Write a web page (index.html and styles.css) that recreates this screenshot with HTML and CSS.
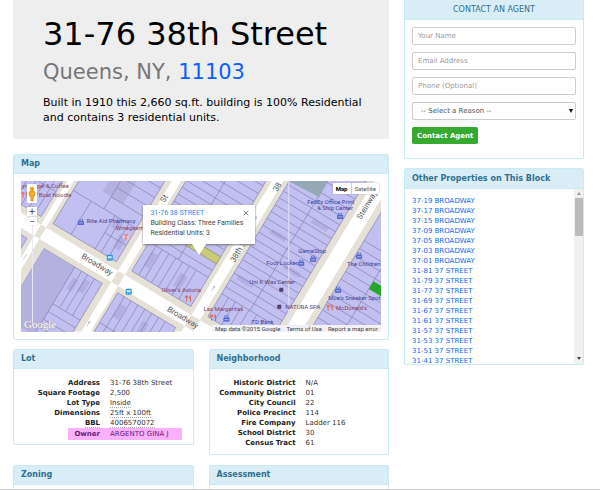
FILE: index.html
```html
<!DOCTYPE html>
<html lang="en">
<head>
<meta charset="utf-8">
<title>31-76 38th Street</title>
<link rel="stylesheet" href="styles.css">
</head>
<body>
<div class="page">
  <main class="main">
    <header class="hero">
      <h1>31-76 38th Street</h1>
      <p class="city">Queens, NY, <a href="#">11103</a></p>
      <p class="summary">Built in 1910 this 2,660 sq.ft. building is 100% Residential and contains 3 residential units.</p>
    </header>

    <section class="panel">
      <h2>Map</h2>
      <div class="map-body">
        <div class="map">
          <svg class="map-art" viewBox="20 181 361 151" aria-label="Street map">
            <defs>
              <g id="shop"><path d="M-3-1H3V3H-3ZM-2-1V-3H2V-1" fill="#5067c9"/><path d="M-1-1V-2H1V-1M-2 1H2" stroke="#d6d8fa" stroke-width=".7" fill="none"/></g>
              <g id="food" fill="none" stroke="#dd6954" stroke-width=".9"><path d="M-2-3V3M-3-3V-1H-1V-3M2 3V-3Q0-2 1 0H2"/></g>
              <g id="bus"><rect x="-3" y="-3" width="6" height="6" rx="1" fill="#2495e4"/><path d="M-2-1.500H2V.5H-2Z" fill="#d4edff"/><path d="M-1.500 2H-.7M.7 2H1.500" stroke="#fff" stroke-width=".8"/></g>
            </defs>
            <path class="walk" d="M20 181H381V332H20Z"/>
            <g transform="translate(116 275) rotate(31)">
              <path class="road" d="M-140-4H300V9H-140ZM-91-200V200H-85V-200ZM-1-250V150H7V-250ZM85-270V120H95V-270ZM173-270V120H188V-270Z"/>
              <path class="block" d="M-160-100H-95V-11H-160ZM-160 15H-96V100H-160ZM-81-130H-7V-11H-81ZM-76 15H-8V140H-76ZM11-190H80V-11H11ZM10 15H78V100H10ZM100-240H166V-11H100ZM195-240H300V-8H195Z"/>
              <path class="big" d="M-76 15H-40V95H-76ZM-55-100H-31V-64H-55Z"/>
              <path class="shade" d="M-30-50h9v12h-9zM-18-36h8v14h-8zM-36 25h6v13h-6zM-26 20h7v14h-7zM18-38h7v16h-7zM54-35h8v15h-8zM20-84h15v5H20zM57-97h14v6H57zM105-63h18v5h-18zM140-96h18v5h-18zM110-120h17v5h-17zM140-150h18v5h-18zM18 23h7v15h-7zM46 26h7v14h-7z"/>
              <path class="lots" d="M-102-100V-11M-110-100V-11M-118-100V-11M-126-100V-11M-120-40H-95M-104 15V60M-96 32H-130
                M-45-130V-50M-81-50H-7M-81-86H-7M-60-50V-11M-32-50V-11M-25-50V-11M-16-50V-11M-32-30H-7M-45-64H-7M-45-75H-7M-45-97H-7M-45-109H-7M-81-112H-45
                M-40 15V140M-32 15V58M-25 15V58M-17 15V58M-40 58H-8M-40 67H-8M-40 76H-8M-40 85H-8M-40 94H-8M-40 103H-8M-40 112H-8
                M19-45V-11M26-45V-11M34-45V-11M42-45V-11M50-45V-11M58-45V-11M66-45V-11M11-45H80M45-190V-45M11-53H80M11-61H80M11-69H80M11-77H80M11-85H80M11-93H80M11-101H80M11-109H80M11-117H80M11-125H80M11-134H80M11-143H80M11-152H80M11-161H80
                M18 15V80M26 15V80M34 15V80M42 15V80M50 15V80M58 15V80M66 15V80M10 50H78
                M108-38V-11M116-38V-11M124-38V-11M132-38V-11M141-38V-11M150-38V-11M133-240V-38M100-38H166M100-46H166M100-54H166M100-62H166M100-70H166M100-78H166M100-86H166M100-94H166M100-102H166M100-110H166M100-118H166M100-126H166M100-134H166M100-142H166M100-150H166M100-158H166M100-166H166M100-174H133M100-182H133M100-190H133M100-198H133M133-176H166M133-188H166
                M224-240V-8M195-40H260M195-49H260M195-58H260M195-67H260M195-76H260M195-85H260M195-94H260M195-103H260M195-112H260M195-121H260M195-130H260M195-139H260M195-148H260M195-157H260"/>
              <path class="home" d="M45-69H80V-61H45Z"/>
              <path class="park" d="M224-127H260V-118H224Z"/>
              <path class="arrow" d="M3-65V-71M2-69 3-71 4-69M90-35V-41M89-39 90-41 91-39M90-116V-122M89-120 90-122 91-120M1 60V54M0 56 1 54 2 56M-88 35V29"/>
            </g>
            <path class="teal" d="M288 181H327L319 197Z"/>
            <path class="seam" d="M288.500 181V332"/>
            <g class="street">
              <text transform="translate(80 258) rotate(31)">Broadway</text>
              <text transform="translate(166 311) rotate(31)">Broadway</text>
              <text transform="translate(164 203) rotate(-59)">St</text>
              <text transform="translate(234 263) rotate(-59)">38th S</text>
              <text transform="translate(277 192) rotate(-59)">38</text>
              <text transform="translate(361 220) rotate(-59)">Steinway</text>
            </g>
            <g class="poi warm">
              <text x="21" y="188">yn Bagel &amp; Coffee</text><text x="31" y="197">er Boat Noodle</text>
              <text x="115" y="230">Winegasm Bar</text><text x="161" y="292">Oliver's Astoria</text>
              <text x="203" y="311">Las Margaritas</text><text x="336" y="310">McDonald's</text>
            </g>
            <g class="poi cool">
              <text x="86" y="223">Rite Aid Pharmacy</text><text x="307" y="204">FedEx Office Print</text><text x="317" y="210">&amp; Ship Center</text>
              <text x="298" y="253">GameStop</text><text x="266" y="265">Foot Locker</text><text x="347" y="266">The Children</text>
              <text x="328" y="300">Moe's Sneaker Spot</text><text x="251" y="324">TD Bank</text>
            </g>
            <g class="poi dark"><text x="249" y="284">Uni K Wax Center</text><text x="285" y="309">NATURA SPA</text><path d="M279 288h4v4h-4zM277 305h4v4h-4z"/></g>
            <use href="#shop" x="80" y="222"/><use href="#shop" x="340" y="216"/><use href="#shop" x="313" y="259"/><use href="#shop" x="301" y="263"/><use href="#shop" x="359" y="256"/><use href="#shop" x="338" y="290"/><use href="#shop" x="226" y="319"/>
            <use href="#food" x="24" y="195"/><use href="#food" x="188" y="299"/><use href="#food" x="213" y="318"/><use href="#food" x="330" y="308"/>
            <circle cx="125" cy="237" r="3" fill="#f4c4cd"/><path d="M123 235H127L125 237V239M124 239H126" fill="none" stroke="#cf5355" stroke-width=".8"/>
            <use href="#bus" x="109" y="258"/><use href="#bus" x="128" y="292"/>
            <path class="rail" d="M31.500 225V327"/>
            <text class="google" x="23" y="328">Google</text>
          </svg>
          <div class="controls">
            <button class="pegman" aria-label="Street View">
              <svg viewBox="0 0 10 19"><circle cx="5" cy="5" r="2.200" fill="#f3a51c"/><path d="M2 8Q5 6 8 8L7.500 12H6.500L6 17H4L3.500 12H2.500Z" fill="#f5ad20" stroke="#c8791b" stroke-width=".6"/></svg>
            </button>
            <div class="zoom"><button aria-label="Zoom in">+</button><button aria-label="Zoom out">−</button></div>
          </div>
          <div class="types"><button class="on">Map</button><button>Satellite</button></div>
          <div class="info">
            <a href="#">31-76 38 STREET</a>
            <p>Building Class: Three Families</p>
            <p>Residential Units: 3</p>
            <button class="close" aria-label="Close"><svg viewBox="0 0 6 6"><path d="M.7.7 5.300 5.300M5.300.7.7 5.300" stroke="#777" stroke-width=".9"/></svg></button>
          </div>
          <div class="credits"><span>Map data ©2015 Google</span><a href="#">Terms of Use</a><a href="#">Report a map error</a></div>
        </div>
      </div>
    </section>

    <div class="facts">
      <section class="panel">
        <h2>Lot</h2>
        <table class="lot">
          <tr><th scope="row">Address</th><td>31-76 38th Street</td></tr>
          <tr><th scope="row">Square Footage</th><td>2,500</td></tr>
          <tr><th scope="row">Lot Type</th><td><span class="hint">Inside</span></td></tr>
          <tr><th scope="row">Dimensions</th><td><span class="hint">25ft x 100ft</span></td></tr>
          <tr><th scope="row"><span class="hint">BBL</span></th><td><span class="hint">4006570072</span></td></tr>
          <tr class="owner"><th scope="row">Owner</th><td>ARGENTO GINA J</td></tr>
        </table>
      </section>
      <section class="panel">
        <h2>Neighborhood</h2>
        <table>
          <tr><th scope="row">Historic District</th><td>N/A</td></tr>
          <tr><th scope="row">Community District</th><td>01</td></tr>
          <tr><th scope="row">City Council</th><td>22</td></tr>
          <tr><th scope="row">Police Precinct</th><td>114</td></tr>
          <tr><th scope="row">Fire Company</th><td>Ladder 116</td></tr>
          <tr><th scope="row">School District</th><td>30</td></tr>
          <tr><th scope="row">Census Tract</th><td>61</td></tr>
        </table>
      </section>
      <section class="panel next"><h2>Zoning</h2></section>
      <section class="panel next"><h2>Assessment</h2></section>
    </div>
  </main>

  <aside class="side">
    <section class="panel contact">
      <h2>CONTACT AN AGENT</h2>
      <form>
        <input type="text" aria-label="Your Name" placeholder="Your Name">
        <input type="email" aria-label="Email Address" placeholder="Email Address">
        <input type="tel" aria-label="Phone (Optional)" placeholder="Phone (Optional)">
        <div class="pick">
          <select aria-label="Reason"><option>-- Select a Reason --</option></select>
        </div>
        <button type="button">Contact Agent</button>
      </form>
    </section>
    <section class="panel others">
      <h2>Other Properties on This Block</h2>
      <div class="scroller">
        <ul>
          <li><a href="#">37-19 BROADWAY</a></li><li><a href="#">37-17 BROADWAY</a></li><li><a href="#">37-15 BROADWAY</a></li>
          <li><a href="#">37-09 BROADWAY</a></li><li><a href="#">37-05 BROADWAY</a></li><li><a href="#">37-03 BROADWAY</a></li>
          <li><a href="#">37-01 BROADWAY</a></li><li><a href="#">31-81 37 STREET</a></li><li><a href="#">31-79 37 STREET</a></li>
          <li><a href="#">31-77 37 STREET</a></li><li><a href="#">31-69 37 STREET</a></li><li><a href="#">31-67 37 STREET</a></li>
          <li><a href="#">31-61 37 STREET</a></li><li><a href="#">31-57 37 STREET</a></li><li><a href="#">31-53 37 STREET</a></li>
          <li><a href="#">31-51 37 STREET</a></li><li><a href="#">31-41 37 STREET</a></li>
        </ul>
        <div class="bar" aria-hidden="true"><i class="up"></i><i class="thumb"></i><i class="down"></i></div>
      </div>
    </section>
  </aside>
</div>
</body>
</html>
```
FILE: styles.css
```css
* { box-sizing: border-box; }
body {
  margin: 0;
  background: #fff;
  color: #333;
  font: 7px/10px "DejaVu Sans", sans-serif;
}
h1, h2, p, ul { margin: 0; padding: 0; font-weight: normal; }
a { color: #1168f5; text-decoration: none; }
button, input, select { font: inherit; margin: 0; }
.page {
  display: grid;
  grid-template-columns: 94fr 45fr;
  gap: 15px;
  padding: 0 16px 0 13px;
  height: 100vh;
  overflow: hidden;
  border-bottom: 1px solid #ccc;
}
.main { min-width: 0; }
.hero {
  padding: 14px 10px 14px 30px;
  background: #eee;
  border-radius: 0 0 2px 2px;
  color: #000;
}
.hero h1 { font-size: 32px; line-height: 40px; white-space: nowrap; }
.city { color: #777; font-size: 21px; line-height: 36px; }
.city a { color: #0a60ff; }
.summary { padding-top: 5px; font-size: 11px; line-height: 15px; }
.panel {
  min-width: 0;
  border: 1px solid #c9ecf2;
  border-radius: 2px;
  background: #fff;
}
.panel h2 {
  padding: 0 7px;
  background: #d9edf7;
  border-bottom: 1px solid #c9ecf2;
  color: #31708f;
  font-size: 8px;
  font-weight: bold;
  line-height: 18px;
}
.main > .panel { margin-top: 15px; }

.map-body { padding: 7px; }
.map { position: relative; overflow: hidden; font: 7px/10px Roboto, sans-serif; }
.map-art { display: block; width: 100%; height: auto; }
.walk { fill: #e6e1d6; }
.road { fill: #fff; }
.block { fill: #c2bff1; stroke: #807da6; stroke-width: .6; }
.big { fill: #b5b1df; }
.shade { fill: #b4afe2; }
.lots { fill: none; stroke: #817ea8; stroke-width: .6; }
.home { fill: #cacb78; stroke: #96995b; stroke-width: .6; }
.park { fill: #26a62b; }
.teal { fill: #94a9b5; }
.arrow { fill: none; stroke: #b8bcc8; stroke-width: .7; }
.seam { stroke: #e3e1f8; stroke-width: 1; }
.street { fill: #555; font-size: 8px; }
.poi { font-size: 6px; }
.warm { fill: #854163; }
.cool { fill: #3f4499; }
.dark { fill: #54406f; }
.rail { stroke: #e9e8f5; stroke-width: 1; }
.google { fill: #fff; stroke: #999; stroke-width: .5; paint-order: stroke; font: 11px "Liberation Serif", serif; }
.map button { display: block; padding: 0; border: 0; background: #fff; color: #555; }
.controls { position: absolute; left: 6px; top: 3px; width: 10px; }
.map .pegman { width: 10px; height: 19px; border-radius: 1px; box-shadow: 0 0 1px #888; }
.pegman svg { display: block; width: 10px; height: 19px; }
.zoom { margin-top: 4px; border-radius: 1px; box-shadow: 0 0 1px #888; }
.zoom button { width: 10px; height: 9px; font-size: 10px; line-height: 9px; }
.zoom button + button { border-top: 1px solid #ddd; }
.types { position: absolute; right: 2px; top: 2px; display: flex; box-shadow: 0 0 1px #888; }
.map .types button { padding: 0 3px; font-size: 6px; line-height: 11px; }
.map .types .on { color: #000; font-weight: bold; border-right: 1px solid #ccc; }
.info {
  position: absolute;
  left: 34%;
  top: 16%;
  width: 112px;
  padding: 3px 7px 6px;
  background: #fff;
  color: #444;
  box-shadow: 0 1px 2px #777;
}
.info a { display: block; color: #2d86ed; }
.info::after {
  content: "";
  position: absolute;
  left: 50%;
  top: 100%;
  margin-left: -7px;
  border: 7px solid transparent;
  border-top: 11px solid #fff;
  border-bottom: 0;
}
.map .close { position: absolute; right: 6px; top: 5px; width: 6px; height: 6px; }
.close svg { display: block; }
.credits { position: absolute; right: 0; bottom: 0; display: flex; background: #f1f0f5; color: #444; font-size: 6px; line-height: 7px; }
.credits > * { padding: 0 3px; color: #444; white-space: nowrap; }

.facts { display: grid; grid-template-columns: 1fr 1fr; gap: 10px 15px; align-items: start; margin-top: 9px; }
table { width: 100%; margin: 9px 0 6px; border-collapse: collapse; table-layout: fixed; }
th, td { height: 10px; padding: 0 5px; line-height: 10px; white-space: nowrap; }
th { width: 51%; text-align: right; color: #222; }
td { text-align: left; }
.lot { margin-bottom: 4px; }
.hint { border-bottom: 1px dotted #aaa; line-height: 8px; display: inline-block; height: 9px; }
.owner { background: linear-gradient(#fbb0fb, #fbb0fb) no-repeat 54px 0 / 114px 12px; }
.owner th, .owner td { height: 12px; color: #6b1a78; }
.next { height: 60px; }

.side { min-width: 0; }
.contact { border-top: 0; border-radius: 0 0 2px 2px; }
.contact h2 { font-weight: normal; text-align: center; line-height: 19px; }
form { display: flex; flex-direction: column; align-items: stretch; gap: 7px; padding: 7px 7px 14px; }
form input, form select {
  width: 100%;
  height: 18px;
  padding: 0 5px;
  border: 1px solid #ccc;
  border-radius: 2px;
  background: #fff;
  color: #555;
}
form input::placeholder { color: #999; }
.pick { position: relative; height: 18px; }
.pick::after {
  content: "";
  position: absolute;
  right: 3px;
  top: 7px;
  border: 2px solid transparent;
  border-top: 4px solid #111;
  border-bottom: 0;
  pointer-events: none;
}
form select { appearance: none; padding-left: 8px; }
form button {
  align-self: flex-start;
  height: 17px;
  padding: 0 5px;
  border: 0;
  border-radius: 2px;
  background: #37a931;
  color: #fff;
  font-weight: bold;
}
.others { margin-top: 9px; }
.others h2 { line-height: 19px; }
.scroller { display: flex; justify-content: space-between; height: 175px; overflow: hidden; }
.scroller ul { padding: 7px; list-style: none; }
.bar { display: flex; flex-direction: column; align-items: center; width: 9px; background: #f1f1f1; }
.up, .down { border: 2px solid transparent; }
.up { margin: 3px 0; border-top: 0; border-bottom: 3px solid #999; }
.down { margin: auto 0 4px; border-bottom: 0; border-top: 3px solid #444; }
.thumb { width: 8px; height: 38px; background: #bbb; }
```
